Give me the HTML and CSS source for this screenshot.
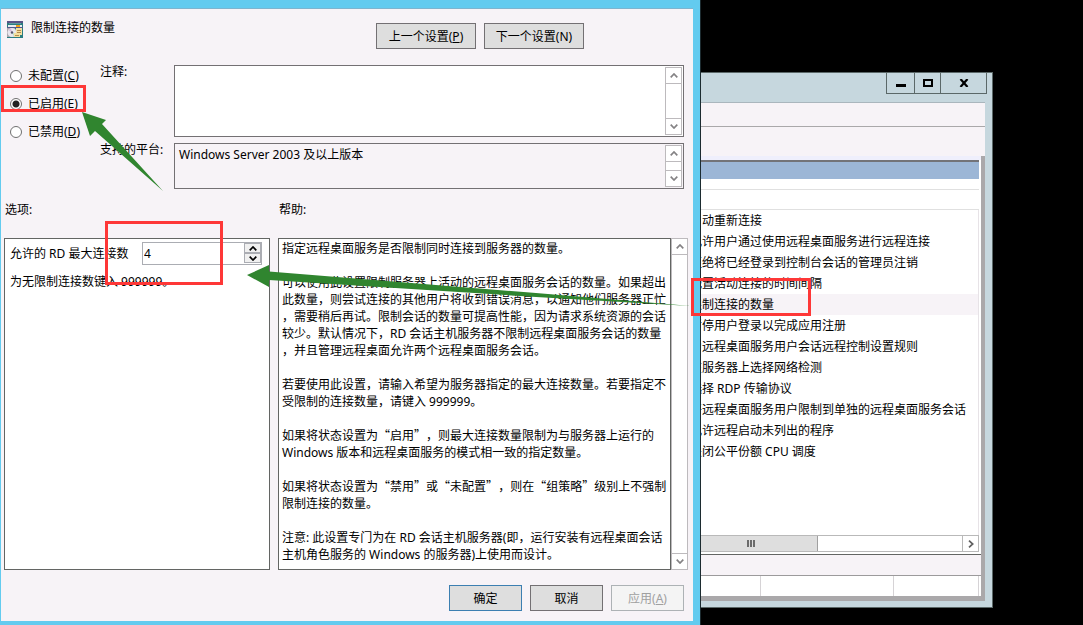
FILE: index.html
```
<!DOCTYPE html>
<html lang="zh-CN">

	<head>
		<meta charset="utf-8" />
		<title>限制连接的数量</title>
		<link rel="stylesheet" href="styles.css">
	</head>

	<body>
		<svg class="defs" aria-hidden="true">
			<symbol id="up" viewBox="0 0 8 5"><path d="M0.7 4.3L4 1l3.3 3.3" fill="none" stroke="currentColor" stroke-width="1.7" /></symbol>
			<symbol id="down" viewBox="0 0 8 5"><path d="M0.7 0.7L4 4l3.3-3.3" fill="none" stroke="currentColor" stroke-width="1.7" /></symbol>
		</svg>

		<!-- 组策略窗口 -->
		<div class="mmc">
			<div class="mmc_title">
				<button type="button" class="min" aria-label="最小化"><svg width="10" height="8"><path d="M0 5h10v3H0z" /></svg></button>
				<button type="button" class="max" aria-label="最大化"><svg width="10" height="8"><path d="M1 1h8v6H1z" fill="none" stroke="#000" stroke-width="2" /></svg></button>
				<button type="button" class="close" aria-label="关闭"><svg width="10" height="8"><path d="M1.500 0l7 8M8.500 0l-7 8" stroke="#000" stroke-width="2.200" /></svg></button>
			</div>
			<div class="mmc_body">
				<div class="menu"></div>
				<div class="tools"></div>
				<div class="pane">
					<div class="pane_head"></div>
					<div class="pane_gap"></div>
					<div class="pane_cols"></div>
					<ul class="list">
						<li>自动重新连接</li>
						<li>允许用户通过使用远程桌面服务进行远程连接</li>
						<li>拒绝将已经登录到控制台会话的管理员注销</li>
						<li>配置活动连接的时间间隔</li>
						<li class="on">限制连接的数量</li>
						<li>暂停用户登录以完成应用注册</li>
						<li>为远程桌面服务用户会话远程控制设置规则</li>
						<li>在服务器上选择网络检测</li>
						<li>选择 RDP 传输协议</li>
						<li>将远程桌面服务用户限制到单独的远程桌面服务会话</li>
						<li>允许远程启动未列出的程序</li>
						<li>关闭公平份额 CPU 调度</li>
					</ul>
					<div class="hscroll">
						<div class="hthumb"><i></i><i></i><i></i></div>
						<div class="htrack"></div>
						<div class="hnext"><svg width="6" height="8"><path d="M1 0.700L4.700 4 1 7.300" fill="none" stroke="#606060" stroke-width="1.700" /></svg></div>
					</div>
				</div>
				<div class="tabs"></div>
				<div class="status"><span class="s1"></span><span class="s2"></span><span class="s3"></span></div>
			</div>
		</div>

		<!-- 设置对话框 -->
		<form class="dialog">
			<div class="head">
				<div class="name">
					<svg width="16" height="17" viewBox="0 0 16 17">
						<path d="M0 0h16v17H0z" fill="#2b7c80" />
						<path d="M0 0h16v2H0z" fill="#5a5487" />
						<path d="M2 2h12v1H2z" fill="#5f9a9c" />
						<path d="M1 4h14v2H1z" fill="#e9edf0" />
						<path d="M9 4h4v2H9z" fill="#f0a018" />
						<path d="M0 6h16v1H0z" fill="#52588c" />
						<path d="M0 7h8v9H0z" fill="#a9a6ad" />
						<circle cx="5" cy="11.500" r="4.500" fill="#e8e6ee" />
						<path d="M5 11.500L1.500 9 4 7.200z" fill="#d7b9dc" />
						<path d="M5 11.500l2 4 2-2z" fill="#b7dcc5" />
						<circle cx="5" cy="11.500" r="1.200" fill="#56526d" />
						<path d="M9 7h6v7H9zM7 12h6v4H7z" fill="#f5dfa0" />
						<path d="M10 9.500h4M10 11.500h4M8 14.500h4" stroke="#b48a50" />
					</svg>
					<span>限制连接的数量</span>
				</div>
				<button type="button" class="btn wide">上一个设置(<u>P</u>)</button>
				<button type="button" class="btn wide">下一个设置(N)</button>
			</div>

			<div class="info">
				<div class="radios">
					<label><input type="radio" name="state">未配置(<u>C</u>)</label>
					<label><input type="radio" name="state" checked>已启用(<u>E</u>)</label>
					<label><input type="radio" name="state">已禁用(<u>D</u>)</label>
				</div>
				<div class="fields">
					<label for="note">注释:</label>
					<div class="area note">
						<textarea id="note"></textarea>
						<div class="scroll"><span><svg><use href="#up" /></svg></span><span><svg><use href="#down" /></svg></span></div>
					</div>
					<label for="plat">支持的平台:</label>
					<div class="area plat">
						<textarea id="plat" readonly>Windows Server 2003 及以上版本</textarea>
						<div class="scroll"><span><svg><use href="#up" /></svg></span><span><svg><use href="#down" /></svg></span></div>
					</div>
				</div>
			</div>

			<div class="main">
				<div class="caption">选项:</div>
				<div class="caption">帮助:</div>
				<div class="options">
					<div class="row">
						<label for="num">允许的 RD 最大连接数</label>
						<div class="spin">
							<input id="num" type="text" value="4">
							<div class="arrows">
								<button type="button" aria-label="增加"><svg><use href="#up" /></svg></button>
								<button type="button" aria-label="减少"><svg><use href="#down" /></svg></button>
							</div>
						</div>
					</div>
					<p>为无限制连接数键入 999999。</p>
				</div>
				<div class="help">
					<div class="help_text">
						<p>指定远程桌面服务是否限制同时连接到服务器的数量。</p>
						<p>可以使用此设置限制服务器上活动的远程桌面服务会话的数量。如果超出<br>此数量，则尝试连接的其他用户将收到错误消息，以通知他们服务器正忙<br>，需要稍后再试。限制会话的数量可提高性能，因为请求系统资源的会话<br>较少。默认情况下，RD 会话主机服务器不限制远程桌面服务会话的数量<br>，并且管理远程桌面允许两个远程桌面服务会话。</p>
						<p>若要使用此设置，请输入希望为服务器指定的最大连接数量。若要指定不<br>受限制的连接数量，请键入 999999。</p>
						<p>如果将状态设置为<q>启用</q>，则最大连接数量限制为与服务器上运行的<br>Windows 版本和远程桌面服务的模式相一致的指定数量。</p>
						<p>如果将状态设置为<q>禁用</q>或<q>未配置</q>，则在<q>组策略</q>级别上不强制<br>限制连接的数量。</p>
						<p>注意: 此设置专门为在 RD 会话主机服务器(即，运行安装有远程桌面会话<br>主机角色服务的 Windows 的服务器)上使用而设计。</p>
					</div>
					<div class="scroll"><span><svg><use href="#up" /></svg></span><span><svg><use href="#down" /></svg></span></div>
				</div>
			</div>

			<div class="foot">
				<button type="button" class="btn ok">确定</button>
				<button type="button" class="btn">取消</button>
				<button type="button" class="btn" disabled>应用(<u>A</u>)</button>
			</div>
		</form>

		<!-- 标注 -->
		<svg class="marks" width="1083" height="625" aria-hidden="true">
			<g fill="none" stroke="#fe3737" stroke-width="3">
				<path d="M2.500 86.500h82v24h-82z" />
				<path d="M106.500 222.500h115v61h-115z" />
				<path d="M692.500 279.500h117v35h-117z" />
			</g>
			<path d="M82 112l24 8-4 4 61 67-68-60-5 5z" fill="#30852f" />
			<path d="M247 275l22-10v6.500L536 293l155 13-155-9-267-17v7z" fill="#30852f" />
		</svg>
	</body>

</html>
```
FILE: styles.css
```
* {
	box-sizing: border-box;
	margin: 0;
	padding: 0;
}

body {
	min-height: 100vh;
	overflow: hidden;
	background: #000;
	color: #000;
	font: 12px/17px "Noto Sans", "Noto Sans CJK SC", sans-serif;
	text-spacing-trim: space-all;
}

button,
input,
textarea {
	font: inherit;
	color: inherit;
}

ul {
	list-style: none;
}

.defs {
	position: absolute;
	width: 0;
	height: 0;
}

/* 组策略窗口 */
.mmc {
	position: absolute;
	left: 640px;
	top: 72px;
	width: 353px;
	padding: 0 7px 6px;
	border: 1px solid #5b6868;
	background: #c6d7de;
}

.mmc_title {
	display: flex;
	justify-content: flex-end;
	height: 29px;
	margin-right: -2px;
}

.mmc_title button {
	display: flex;
	align-items: center;
	justify-content: center;
	height: 21px;
	border: 1px solid #5b6868;
	border-top: 0;
	border-right: 0;
	background: #c6d7de;
}

.mmc_title .min {
	width: 28px;
}

.mmc_title .max {
	width: 26px;
}

.mmc_title .close {
	width: 47px;
	border-right: 1px solid #5b6868;
}

.mmc_body {
	border-top: 1px solid #aab6bd;
	border-bottom: 5px solid #aaa8aa;
	background: #f7f3f7;
}

.menu {
	height: 24px;
	border-bottom: 1px solid #aaa8aa;
}

.tools {
	height: 29px;
}

.pane {
	border-right: 4px solid #aaa8aa;
	padding: 0 2px 2px 0;
	background: #fff;
}

.pane::before {
	content: "";
	display: block;
	height: 4px;
	margin-right: -2px;
	background: #efeffc;
}

.pane_head {
	height: 19px;
	border-top: 2px solid #737378;
	background: #9cb6d6;
}

.pane_gap {
	height: 11px;
	border-bottom: 1px solid #e0e0e0;
}

.pane_cols {
	height: 20px;
	border-bottom: 1px solid #e0e0e0;
}

.list {
	height: 325px;
	border-right: 1px solid #e7e3e7;
	overflow: hidden;
}

.list li {
	height: 21px;
	padding-left: 42px;
	line-height: 21px;
	white-space: nowrap;
}

.list .on {
	background: #f7f3f7;
}

.hscroll {
	display: flex;
	height: 17px;
	border: 1px solid #b9b9b9;
}

.hthumb {
	display: flex;
	justify-content: center;
	align-items: center;
	gap: 1px;
	width: 169px;
	padding-left: 36px;
	border-right: 1px solid #a0a0a0;
	background: #dedede;
}

.hthumb i {
	width: 2px;
	height: 7px;
	background: #6b6b6b;
}

.htrack {
	flex: 1;
}

.hnext {
	display: flex;
	align-items: center;
	justify-content: center;
	width: 16px;
	border-left: 1px solid #b9b9b9;
}

.tabs {
	height: 21px;
	border-right: 4px solid #aaa8aa;
	box-shadow: inset 0 1px #636563;
}

.status {
	display: flex;
	height: 21px;
	padding: 1px 2px 0 0;
	border-right: 4px solid #aaa8aa;
	background: #fff;
	box-shadow: inset 0 1px #9c9a9c;
}

.status span {
	border-right: 1px solid #d6d3d6;
}

.s1 {
	width: 113px;
}

.s2 {
	width: 133px;
}

.s3 {
	flex: 1;
}

/* 设置对话框 */
.dialog {
	position: absolute;
	left: 0;
	top: 0;
	width: 700px;
	min-height: 100vh;
	padding: 15px 9px 10px 3px;
	border: solid #63cbef;
	border-width: 8px 7px 4px 1px;
	box-shadow: inset 0 1px #7fb4ce, 1px 0 #1c2b30;
	background: #f7f3f7;
}

.dialog .head {
	display: flex;
	gap: 8px;
	height: 42px;
}

.name {
	display: flex;
	flex: 0 0 364px;
	gap: 8px;
	padding-left: 3px;
	line-height: 10px;
}

.name svg {
	margin-top: -2px;
}

.btn {
	width: 73px;
	height: 26px;
	border: 1px solid #737073;
	background: #dedede;
}

.btn.wide {
	width: 100px;
}

.btn.ok {
	border-color: #3c7fb1;
}

.btn:disabled {
	border-color: #adb2b5;
	background: #f4f4f4;
	color: #a0a0a0;
}

.info {
	display: flex;
	justify-content: space-between;
}

.radios {
	display: flex;
	flex-direction: column;
	gap: 11px;
	padding: 2px 0 0 6px;
}

.radios label {
	display: flex;
	align-items: center;
}

.radios input {
	appearance: none;
	width: 12px;
	height: 12px;
	margin-right: 6px;
	border: 1px solid #707070;
	border-radius: 50%;
	background: #fff;
}

.radios input:checked {
	background: radial-gradient(circle, #222 0 3px, #fff 4px);
}

.fields {
	display: grid;
	grid-template-columns: 74px 510px;
	row-gap: 6px;
	line-height: 13px;
}

.area {
	display: flex;
	padding: 1px;
	border: 1px solid #737073;
	background: #fff;
}

.note {
	height: 72px;
}

.plat {
	height: 46px;
	background: #f7f3f7;
}

.area textarea {
	flex: 1;
	padding: 1px 3px;
	border: 0;
	outline: 0;
	background: none;
	line-height: 17px;
	resize: none;
	overflow: hidden;
}

.scroll {
	display: flex;
	flex-direction: column;
	justify-content: space-between;
	width: 17px;
	border: 1px solid #bdbabd;
	background: #fff;
	color: #848284;
}

.scroll span {
	display: flex;
	align-items: center;
	justify-content: center;
	height: 16px;
}

.scroll span:first-child {
	border-bottom: 1px solid #bdbabd;
}

.scroll span:last-child {
	border-top: 1px solid #bdbabd;
}

.scroll svg,
.arrows svg {
	width: 8px;
	height: 5px;
}

.main {
	display: grid;
	grid-template-columns: 266px 410px;
	column-gap: 8px;
	padding-top: 12px;
}

.caption {
	height: 37px;
	padding-left: 1px;
}

.options {
	padding: 3px 7px 0 5px;
	border: 1px solid #636563;
	background: #fff;
}

.row {
	display: flex;
	align-items: center;
	justify-content: space-between;
	margin-bottom: 8px;
}

.spin {
	display: flex;
	width: 120px;
	height: 23px;
	border: 1px solid #abadb3;
}

.spin input {
	flex: 1;
	min-width: 0;
	padding: 0 1px;
	border: 0;
	outline: 0;
}

.arrows {
	display: flex;
	flex-direction: column;
	width: 17px;
}

.arrows button {
	display: flex;
	align-items: center;
	justify-content: center;
	height: 10px;
	border: 1px solid #abadb3;
	background: #f0f0f0;
}

.help {
	display: flex;
}

.help_text {
	flex: 1;
	min-height: 332px;
	padding: 1px 3px 6px;
	border: 1px solid #636563;
	background: #fff;
	white-space: nowrap;
}

.help_text p + p {
	margin-top: 17px;
}

/* 全角引号 */
.help_text q {
	font-family: "Noto Sans CJK SC", sans-serif;
	line-height: 1;
	quotes: "“" "”";
}

.foot {
	display: flex;
	justify-content: flex-end;
	gap: 8px;
	padding-top: 15px;
}

.marks {
	position: absolute;
	left: 0;
	top: 0;
}
```
